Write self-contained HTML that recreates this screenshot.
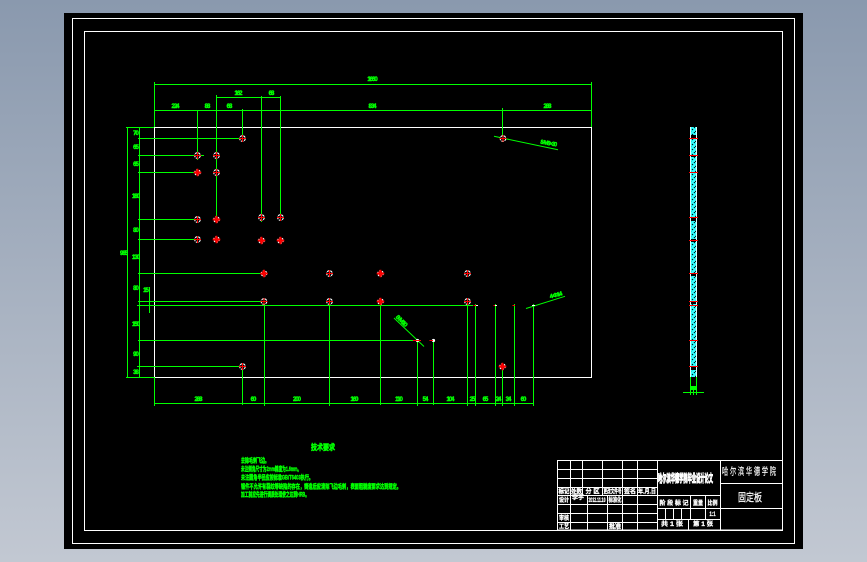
<!DOCTYPE html>
<html><head><meta charset="utf-8">
<style>
html,body{margin:0;padding:0;width:867px;height:562px;overflow:hidden;background:linear-gradient(#8a99ae,#c2c8d2)}
svg{position:absolute;left:0;top:0;display:block}
text{font-family:"Liberation Sans","Noto Sans CJK SC",sans-serif}
.d{fill:#00ff00;font-size:6px;font-weight:bold;text-anchor:middle;stroke:#00ff00;stroke-width:.45;letter-spacing:-1px}
.c{fill:#00ff00;font-size:6.5px;font-weight:bold;stroke:#00ff00;stroke-width:.45}
.w{fill:#fff;font-size:6px;font-weight:bold;stroke:#fff;stroke-width:.3;text-anchor:middle}
</style></head><body>
<svg width="867" height="562" viewBox="0 0 867 562">
<defs>
<pattern id="h" width="5" height="5" patternUnits="userSpaceOnUse" patternTransform="translate(690 127)">
<rect width="5" height="5" fill="#30ffff"/>
<path d="M0 5L5 0" stroke="#000" stroke-width="1" stroke-dasharray="1.500 1.300"/>
</pattern>
<g id="o"><circle r="2.800" fill="#000" stroke="#fff" stroke-width="1.100" stroke-dasharray="2.600 .8"/><path d="M-3.500 0H3.500M0-3.500V3.500" stroke="#f00" stroke-width="1"/></g>
<g id="r"><circle r="2.800" fill="#c00" stroke="#fff" stroke-width="1" stroke-dasharray="1.500 1.400"/><path d="M-3.800 0H3.800M0-3.800V3.800" stroke="#f00" stroke-width="1.800"/></g>
</defs>
<rect x="64" y="13" width="739" height="536" fill="#000"/>
<g fill="none" stroke="#fff" stroke-width="1" shape-rendering="crispEdges">
<rect x="72.500" y="18.500" width="722" height="525"/>
<rect x="84.500" y="31.500" width="698" height="499"/>
<rect x="154.500" y="127.500" width="437" height="250"/>
</g>
<g stroke="#00ff00" stroke-width="1" fill="none" shape-rendering="crispEdges">
<path d="M154.500 84.500H591.500M154.500 110.500H591.500M216.500 97.500H280.500M154.500 82V127M591.500 82V127"/>
<path d="M197.500 110V160M242.500 109V141M216.500 95V222M261.500 96V222M280.500 96V221M502.500 108V142"/>
<path d="M126 127.500H154M126 377.500H154M127.500 127V377M139.500 127V377"/>
<path d="M138 138.500H240M138 155.500H204M138 172.500H197M138 219.500H197M138 239.500H200M138 273.500H263M138 301.500H263"/>
<path d="M137 305.500H473M138 340.500H418M137 366.500H240M149.500 287V313"/>
<path d="M154.500 403.500H533.500M154.500 377V406M242.500 363V405M264.500 299V406M329.500 305V406M380.500 305V405M417.500 340V406M433.500 340V405M467.500 305V406M475.500 304V406M495.500 304V406M502.500 367V406M514.500 304V406M533.500 304V406"/>
</g>
<g stroke="#00ff00" stroke-width="1" fill="none">
<path d="M494 136.300L558 149.700"/>
<path d="M394 318L424 346.500"/>
<path d="M526 308.500L565 296.300"/>
</g>
<g>
<use href="#o" x="197.500" y="155.500"/><use href="#o" x="216.500" y="155.500"/>
<use href="#r" x="197.500" y="172.500"/><use href="#o" x="216.500" y="172.500"/>
<use href="#o" x="242.500" y="138.500"/>
<use href="#o" x="197.500" y="219.500"/><use href="#r" x="216.500" y="219.500"/>
<use href="#o" x="261.500" y="217.500"/><use href="#o" x="280.500" y="217.500"/>
<use href="#o" x="197.500" y="239.500"/><use href="#r" x="216.500" y="239.500"/>
<use href="#r" x="261.500" y="240.500"/><use href="#r" x="280.500" y="240.500"/>
<use href="#r" x="264" y="273.500"/><use href="#o" x="329.500" y="273.500"/>
<use href="#r" x="380.500" y="273.500"/><use href="#o" x="467.500" y="273.500"/>
<use href="#o" x="264" y="301.500"/><use href="#o" x="329.500" y="301.500"/>
<use href="#r" x="380.500" y="301.500"/><use href="#o" x="467.500" y="301.500"/>
<use href="#o" x="242.500" y="366.500"/><use href="#r" x="502.500" y="366.500"/>
<use href="#o" x="503" y="138.500"/>
</g>
<g fill="#fff"><circle cx="417.500" cy="340.500" r="1.600"/><circle cx="433.500" cy="340.500" r="1.600"/></g>
<path d="M413 340.500H421M429.500 340.500H433" stroke="#f00" stroke-width="1"/>
<path d="M473.500 305.500H478M493.500 305.500H497M512.500 305.500H515" stroke="#f00" stroke-width="1" shape-rendering="crispEdges"/>
<path d="M476 305.500H478M495 305.500H497M532 305.500H535" stroke="#fff" stroke-width="1" shape-rendering="crispEdges"/>
<g class="dims">
<text class="d" x="372" y="81">1660</text>
<text class="d" x="175" y="108">224</text><text class="d" x="207" y="108">88</text><text class="d" x="229" y="108">68</text>
<text class="d" x="372" y="108">834</text><text class="d" x="547" y="108">288</text>
<text class="d" x="238" y="95">162</text><text class="d" x="271" y="95">68</text>
<text class="d" x="135.500" y="135">70</text><text class="d" x="135.500" y="149">65</text><text class="d" x="135.500" y="166">65</text>
<text class="d" x="135.500" y="198">180</text><text class="d" x="135.500" y="232">80</text><text class="d" x="135.500" y="259">130</text>
<text class="d" x="135.500" y="290">80</text><text class="d" x="135.500" y="326">150</text><text class="d" x="135.500" y="356">90</text><text class="d" x="135.500" y="374">38</text>
<text class="d" x="123.500" y="255">985</text><text class="d" x="145.500" y="292">15</text>
<text class="d" x="198" y="401">288</text><text class="d" x="253" y="401">60</text><text class="d" x="296.500" y="401">200</text>
<text class="d" x="354" y="401">160</text><text class="d" x="398.500" y="401">110</text><text class="d" x="425" y="401">54</text>
<text class="d" x="450" y="401">104</text><text class="d" x="472" y="401">25</text><text class="d" x="485" y="401">65</text>
<text class="d" x="498" y="401">24</text><text class="d" x="508" y="401">34</text><text class="d" x="523" y="401">60</text>
<text class="d" x="0" y="0" transform="translate(548 145) rotate(10)" textLength="16" lengthAdjust="spacingAndGlyphs">8-M8×30</text>
<text class="d" x="0" y="0" transform="translate(400 322) rotate(45)" textLength="13" lengthAdjust="spacingAndGlyphs">8-M10</text>
<text class="d" x="0" y="0" transform="translate(556 297) rotate(-15)" textLength="12" lengthAdjust="spacingAndGlyphs">4-Φ14</text>
</g>
<rect x="690" y="127" width="7" height="250" fill="url(#h)"/>
<path d="M690.500 127V377M696.500 127V377" stroke="#dff" stroke-width="1" shape-rendering="crispEdges"/>
<g fill="#000" shape-rendering="crispEdges">
<rect x="691" y="135" width="5" height="3"/><rect x="691" y="155" width="5" height="2"/><rect x="691" y="217" width="5" height="4"/>
<rect x="691" y="239" width="5" height="3"/><rect x="691" y="273" width="5" height="3"/><rect x="691" y="301" width="5" height="3"/><rect x="691" y="367" width="5" height="3"/>
</g>
<path d="M689 138.500H698M689 155.500H698M689 172.500H698M689 217.500H698M689 240.500H698M689 273.500H698M689 301.500H698M689 305.500H698M689 340.500H698M689 366.500H698" stroke="#f00" stroke-width="1" shape-rendering="crispEdges"/>
<g stroke="#00ff00" stroke-width="1" fill="none" shape-rendering="crispEdges">
<path d="M690.500 377V395M696.500 377V395M693.500 390V395M683 392.500H704"/>
</g>
<rect x="691" y="386" width="5" height="4" fill="#00ff00"/>
<text x="323" y="450" class="c" style="font-size:8px;text-anchor:middle;stroke-width:.6" textLength="24" lengthAdjust="spacingAndGlyphs">技术要求</text>
<text class="c" x="241" y="462.500" textLength="28" lengthAdjust="spacingAndGlyphs">去除毛刺飞边。</text>
<text class="c" x="241" y="471" textLength="60" lengthAdjust="spacingAndGlyphs">未注倒角尺寸为2mm精度为1.6mm。</text>
<text class="c" x="241" y="479.500" textLength="72" lengthAdjust="spacingAndGlyphs">未注圆角半径应按标准GB/T6403执行。</text>
<text class="c" x="241" y="488.500" textLength="160" lengthAdjust="spacingAndGlyphs">锻件不允许有裂纹等缺陷的存在，铸造后应清除飞边毛刺，表面粗糙度要求达到规定。</text>
<text class="c" x="241" y="496.500" textLength="68" lengthAdjust="spacingAndGlyphs">加工前应先进行调质处理使之达到HRB。</text>
<g stroke="#fff" stroke-width="1" fill="none" shape-rendering="crispEdges">
<rect x="557.500" y="460.500" width="225" height="69.500"/>
<path d="M657.500 460.500V530M720.500 460.500V530"/>
<path d="M557.500 469.500H657.500M557.500 478.500H657.500M557.500 487.500H657.500M557.500 495.500H720.500M557.500 504.500H657.500M557.500 513.500H657.500M557.500 522.500H657.500"/>
<path d="M570.500 460.500V530M582.500 460.500V495.500M602.500 460.500V495.500M622.500 460.500V530M637.500 460.500V530M587.500 495.500V530M607.500 495.500V530"/>
<path d="M720.500 483.500H782M657.500 508.500H782M657.500 519.500H720.500M690.500 495.500V519M705.500 495.500V519.500M665.500 508.500V519.500M673.500 508.500V519.500M681.500 508.500V519.500M688.500 519.500V530"/>
</g>
<g>
<text class="w" x="564" y="493.500" textLength="11" lengthAdjust="spacingAndGlyphs">标记</text>
<text class="w" x="576.500" y="493.500" textLength="11" lengthAdjust="spacingAndGlyphs">处数</text>
<text class="w" x="592.500" y="493.500" textLength="14" lengthAdjust="spacingAndGlyphs">分 区</text>
<text class="w" x="612.500" y="493.500" textLength="18" lengthAdjust="spacingAndGlyphs">更改文件号</text>
<text class="w" x="630" y="493.500" textLength="12" lengthAdjust="spacingAndGlyphs">签名</text>
<text class="w" x="647" y="493.500" textLength="18" lengthAdjust="spacingAndGlyphs">年.月.日</text>
<text class="w" x="564" y="502" textLength="10" lengthAdjust="spacingAndGlyphs">设计</text>
<text class="w" x="578" y="499.500" textLength="12" lengthAdjust="spacingAndGlyphs">李宇</text>
<text class="w" x="597" y="502" textLength="17" lengthAdjust="spacingAndGlyphs">2012.11.10</text>
<text class="w" x="615" y="502" textLength="13" lengthAdjust="spacingAndGlyphs">标准化</text>
<text class="w" x="564" y="520" textLength="10" lengthAdjust="spacingAndGlyphs">审核</text>
<text class="w" x="564" y="528.500" textLength="10" lengthAdjust="spacingAndGlyphs">工艺</text>
<text class="w" x="615" y="528.500" textLength="12" lengthAdjust="spacingAndGlyphs">批准</text>
<text class="w" x="685.500" y="482" textLength="55" lengthAdjust="spacingAndGlyphs" style="font-size:11px;stroke-width:1">哈尔滨华德学院毕业设计论文</text>
<text class="w" x="674" y="505" textLength="29" lengthAdjust="spacingAndGlyphs">阶 段 标 记</text>
<text class="w" x="698" y="505" textLength="10" lengthAdjust="spacingAndGlyphs">重量</text>
<text class="w" x="712.500" y="505" textLength="10" lengthAdjust="spacingAndGlyphs">比例</text>
<text class="w" x="712.500" y="516" textLength="6" lengthAdjust="spacingAndGlyphs">1:1</text>
<text class="w" x="672" y="526" textLength="22" lengthAdjust="spacingAndGlyphs">共 1 张</text>
<text class="w" x="703" y="526" textLength="20" lengthAdjust="spacingAndGlyphs">第 1 张</text>
<text class="w" x="749" y="475" textLength="54" lengthAdjust="spacingAndGlyphs" style="font-size:10px;font-weight:normal;stroke-width:.15">哈 尔 滨 华 德 学 院</text>
<text class="w" x="750" y="501" textLength="24" lengthAdjust="spacingAndGlyphs" style="font-size:11px;font-weight:normal;stroke-width:.25">固定板</text>
</g>
</svg>
</body></html>
